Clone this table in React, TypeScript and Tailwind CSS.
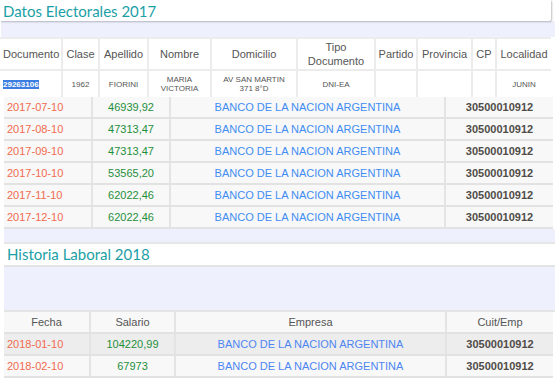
import React from "react";

const months = [
  ["2017-07-10", "46939,92"],
  ["2017-08-10", "47313,47"],
  ["2017-09-10", "47313,47"],
  ["2017-10-10", "53565,20"],
  ["2017-11-10", "62022,46"],
  ["2017-12-10", "62022,46"],
];

const topHeaders = [
  "Documento",
  "Clase",
  "Apellido",
  "Nombre",
  "Domicilio",
  "Tipo Documento",
  "Partido",
  "Provincia",
  "CP",
  "Localidad",
];

export default function App() {
  return (
    <div className="w-[555px] h-[382px] bg-white overflow-hidden font-['Liberation_Sans',Arial,sans-serif]">
      {/* Header 1 */}
      <div className="w-[551px] h-[21px] bg-white rounded-br-[2px] shadow-[1px_1px_2px_rgba(0,0,0,0.25)] relative z-10 flex items-center pl-[3px]">
        <span className="font-['Lato',sans-serif] text-[15px] leading-none text-[#1b9fa6] pt-[1px]">
          Datos Electorales 2017
        </span>
      </div>
      <div className="ml-[1px] h-[16px] bg-[#eef1fd]" />

      {/* Top table */}
      <div className="w-[551px] grid grid-cols-[63px_37px_49px_63px_86px_78px_42px_55px_24px_54px] bg-white">
        {topHeaders.map((h, i) => (
          <div
            key={h}
            className={`h-[34px] flex items-center justify-center text-center text-[11px] leading-[14px] text-[#555] border-t-2 border-b-2 border-[#ececec] ${i < 9 ? "border-r-2" : ""} ${i === 0 ? "justify-start pl-[3px]" : ""}`}
          >
            {h === "Tipo Documento" ? (
              <span>
                Tipo
                <br />
                Documento
              </span>
            ) : (
              h
            )}
          </div>
        ))}
        {[
          <span className="bg-[#3b7de0] text-white font-bold">29263106</span>,
          "1962",
          "FIORINI",
          <span>
            MARIA
            <br />
            VICTORIA
          </span>,
          <span>
            AV SAN MARTIN
            <br />
            371 8°D
          </span>,
          "DNI-EA",
          "",
          "",
          "",
          "JUNIN",
        ].map((c, i) => (
          <div
            key={i}
            className={`h-[26px] flex items-center text-[8px] leading-[9px] text-[#555] text-center ${i === 0 ? "justify-start pl-[3px]" : "justify-center"} ${i < 9 ? "border-r-2 border-[#ececec]" : ""}`}
          >
            {c}
          </div>
        ))}
      </div>

      <div className="pl-[4px]">
        {/* Rows 2017 */}
        <div className="w-[549px]">
          {months.map(([d, a]) => (
            <div
              key={d}
              className="grid grid-cols-[89px_78px_275px_107px] h-[22px] bg-[#f8f8f8] border-b-2 border-[#e2e2e2] text-[11px] leading-none"
            >
              <div className="flex items-center pl-[3px] text-[#f26a4f] border-r-2 border-[#e4e4e4]">{d}</div>
              <div className="flex items-center justify-center text-[#1f8f3c] border-r-2 border-[#e4e4e4]">{a}</div>
              <div className="flex items-center justify-center text-[#3f8df2] border-r-2 border-[#e4e4e4]">
                BANCO DE LA NACION ARGENTINA
              </div>
              <div className="flex items-center justify-center font-bold text-[#504c48]">30500010912</div>
            </div>
          ))}
        </div>
        <div className="h-[15px] bg-[#eef1fd] border-b-2 border-[#e6e6e6]" />

        {/* Header 2 */}
        <div className="h-[23px] bg-white border-b-2 border-[#e4e4e4] flex items-center pl-[3px]">
          <span className="font-['Lato',sans-serif] text-[15px] leading-none text-[#1b9fa6]">
            Historia Laboral 2018
          </span>
        </div>
        <div className="h-[45px] bg-[#eef1fd] border-b-2 border-[#e4e4e4]" />

        {/* Bottom table */}
        <div className="w-[549px] text-[11px] leading-none">
          <div className="grid grid-cols-[87px_85px_271px_106px] h-[22px] bg-[#f8f8f8] border-b-2 border-[#e2e2e2] text-[#555]">
            <div className="flex items-center justify-center border-r-2 border-[#e4e4e4]">Fecha</div>
            <div className="flex items-center justify-center border-r-2 border-[#e4e4e4]">Salario</div>
            <div className="flex items-center justify-center border-r-2 border-[#e4e4e4]">Empresa</div>
            <div className="flex items-center justify-center">Cuit/Emp</div>
          </div>
          {[
            ["2018-01-10", "104220,99", "bg-[#ededed]"],
            ["2018-02-10", "67973", "bg-[#f8f8f8]"],
          ].map(([d, a, bg]) => (
            <div
              key={d}
              className={`grid grid-cols-[87px_85px_271px_106px] h-[22px] ${bg} border-b-2 border-[#e2e2e2]`}
            >
              <div className="flex items-center pl-[3px] text-[#f26a4f] border-r-2 border-[#e4e4e4]">{d}</div>
              <div className="flex items-center justify-center text-[#1f8f3c] border-r-2 border-[#e4e4e4]">{a}</div>
              <div className="flex items-center justify-center text-[#4d86f2] border-r-2 border-[#e4e4e4]">
                BANCO DE LA NACION ARGENTINA
              </div>
              <div className="flex items-center justify-center font-bold text-[#504c48]">30500010912</div>
            </div>
          ))}
        </div>
      </div>
    </div>
  );
}
